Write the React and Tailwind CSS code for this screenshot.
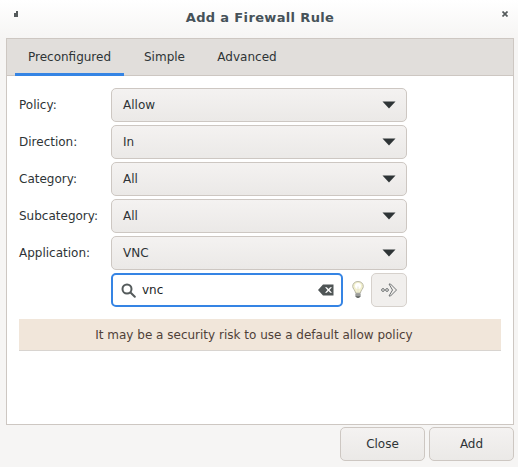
const Arrow = () => (
  <svg width="14" height="8" viewBox="0 0 14 8" className="shrink-0">
    <path d="M0.5 0.5H13.5L7 7.5Z" fill="#2e3436" />
  </svg>
);

const Combo = ({ value }) => (
  <div className="flex h-[34px] w-[296px] items-center justify-between rounded-[5px] border border-[#cdc7c2] bg-gradient-to-b from-[#f4f2f1] to-[#ebe9e7] pl-[11px] pr-[10px]">
    <span className="mt-[-1px]">{value}</span>
    <Arrow />
  </div>
);

const Row = ({ label, value }) => (
  <div className="flex h-[34px] items-center">
    <span className="mt-[-1px] w-[92px]">{label}</span>
    <Combo value={value} />
  </div>
);

const Button = ({ children }) => (
  <div className="flex h-[34px] w-[85px] items-center justify-center rounded-[5px] border border-[#cdc7c2] bg-gradient-to-b from-[#f4f2f1] to-[#ebe9e7]">
    <span className="mt-[-1px]">{children}</span>
  </div>
);

const SearchBox = () => (
  <div className="flex h-[34px] w-[232px] items-center rounded-[5px] border-2 border-[#3584e4] bg-white pl-[8px] pr-[7px]">
    <svg width="15" height="15" viewBox="0 0 15 15" className="shrink-0" fill="none" stroke="#555b5c" strokeWidth="2">
      <circle cx="6" cy="6" r="4.5" />
      <path d="M9.5 9.5L13.8 13.8" strokeLinecap="round" />
    </svg>
    <span className="ml-[6px] mt-[-1px] grow text-[#1c2526]">vnc</span>
    <svg width="16" height="12" viewBox="0 0 16 12" className="shrink-0">
      <path fillRule="evenodd" d="M5 0.5H15.5V11.5H5L0 6ZM7 3.2L9.5 6L7 8.8H8.8L10.5 7L12.2 8.8H14L11.5 6L14 3.2H12.2L10.5 5L8.8 3.2Z" fill="#4f5556" />
    </svg>
  </div>
);

const Bulb = () => (
  <svg width="12" height="18" viewBox="0 0 12 18">
    <path d="M6 0.5C2.8 0.5 0.7 2.6 0.7 5.4C0.7 7.8 3.2 9 3.6 12H8.4C8.8 9 11.3 7.8 11.3 5.4C11.3 2.6 9.2 0.5 6 0.5Z" fill="#f3f1cf" stroke="#b9b8a6" />
    <circle cx="6" cy="5" r="3" fill="#ffffff" />
    <path d="M6 5.5V11.5" fill="none" stroke="#e6e5d2" />
    <path d="M3.5 12.5H8.5V15.5L7 17H5L3.5 15.5Z" fill="#6d706e" />
    <path d="M3.5 14H8.5" stroke="#c9c9c5" />
  </svg>
);

const GoButton = () => (
  <div className="ml-[7px] flex h-[34px] w-[36px] items-center justify-center rounded-[5px] border border-[#d6d1cc] bg-[#f1efed]">
    <svg width="17" height="14" viewBox="0 0 17 14" fill="none" stroke="#6f7374">
      <path d="M9.5 1L15.5 7L9.5 13H8L11.5 7L8 1Z" />
      <circle cx="2" cy="7" r="1.4" />
      <circle cx="6" cy="7" r="1.4" />
    </svg>
  </div>
);

const App = () => {
  return (
    <div className="flex h-[467px] w-[518px] flex-col bg-[#f6f5f4] text-[12px] leading-none text-[#2e3436] [font-family:'DejaVu_Sans',sans-serif]">
      <div className="relative flex h-[38px] shrink-0 items-center justify-center bg-gradient-to-b from-[#ffffff] to-[#f6f5f4]">
        <span className="ml-[2px] mt-[-3px] text-[13px] font-bold tracking-[0.35px] text-[#465259]">Add a Firewall Rule</span>
        <svg width="4" height="6" viewBox="0 0 4 6" className="absolute left-[14px] top-[11px]">
          <path d="M0 2H2V0H4V6H0Z" fill="#555b5c" />
        </svg>
        <svg width="6" height="6" viewBox="0 0 6 6" className="absolute left-[502px] top-[11px]" stroke="#555b5c" strokeWidth="1.7">
          <path d="M0.5 0.5L5.5 5.5M5.5 0.5L0.5 5.5" />
        </svg>
      </div>

      <div className="ml-[6px] flex h-[387px] w-[508px] shrink-0 flex-col border border-[#cdc7c2] bg-white">
        <div className="flex h-[37px] shrink-0 border-b border-[#cdc7c2] bg-[#e1dedb] pl-2">
          <div className="mb-[-1px] flex w-[109px] items-center justify-center border-b-[3px] border-[#3584e4] pt-[1px]">Preconfigured</div>
          <div className="flex w-[81px] items-center justify-center">Simple</div>
          <div className="flex w-[84px] items-center justify-center">Advanced</div>
        </div>

        <div className="flex flex-col gap-[3px] pl-3 pt-3">
          <Row label="Policy:" value="Allow" />
          <Row label="Direction:" value="In" />
          <Row label="Category:" value="All" />
          <Row label="Subcategory:" value="All" />
          <Row label="Application:" value="VNC" />
          <div className="flex h-[34px] items-center pl-[92px]">
            <SearchBox />
            <div className="ml-[9px]"><Bulb /></div>
            <GoButton />
          </div>
        </div>

        <div className="mx-3 mt-3 flex h-[32px] w-[482px] items-center justify-center border-b border-[#d8d4d0] bg-[#f1e6da] pr-3 text-[#4f3f38]">
          It may be a security risk to use a default allow policy
        </div>
      </div>

      <div className="mt-[2px] flex justify-end gap-1 pr-[4px]">
        <Button>Close</Button>
        <Button>Add</Button>
      </div>
    </div>
  );
};

export default App;
